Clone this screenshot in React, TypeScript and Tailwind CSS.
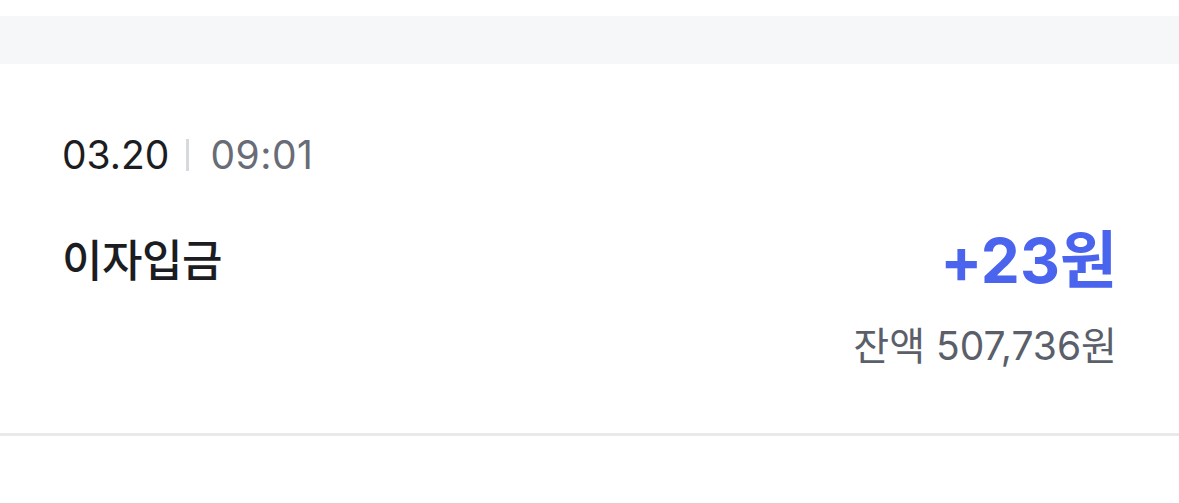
export default function App() {
  return (
    <div
      className="w-[1179px] h-[503px] bg-white"
      style={{ fontFamily: 'Inter, "Noto Sans CJK KR", sans-serif' }}
    >
      <div className="h-[16px]" />
      <div className="h-[48px] bg-[#f6f7f9]" />
      <div className="px-[62px] pt-[68px] pb-[64px] border-b-[3px] border-[#e8e9eb]">
        <div className="flex items-center h-[46px] text-[39px] leading-[46px]">
          <span className="text-[#1c1d22]">03.20</span>
          <span className="ml-[17px] mr-[21px] w-[3px] h-[32px] bg-[#d8d9de]" />
          <span className="text-[#686c77] tracking-[0.5px]">09:01</span>
        </div>
        <div className="flex justify-between items-start mt-[56px]">
          <div className="text-[44px] leading-[54px] font-medium text-[#1c1d22] tracking-[-0.5px]">
            이자입금
          </div>
          <div className="flex flex-col items-end">
            <div className="text-[62px] leading-[68px] font-bold text-[#4a64ee] -mt-[7px]">
              +23원
            </div>
            <div className="text-[39px] leading-[46px] text-[#5b5f6a] mt-[28px]">
              잔액 507,736원
            </div>
          </div>
        </div>
      </div>
    </div>
  );
}
